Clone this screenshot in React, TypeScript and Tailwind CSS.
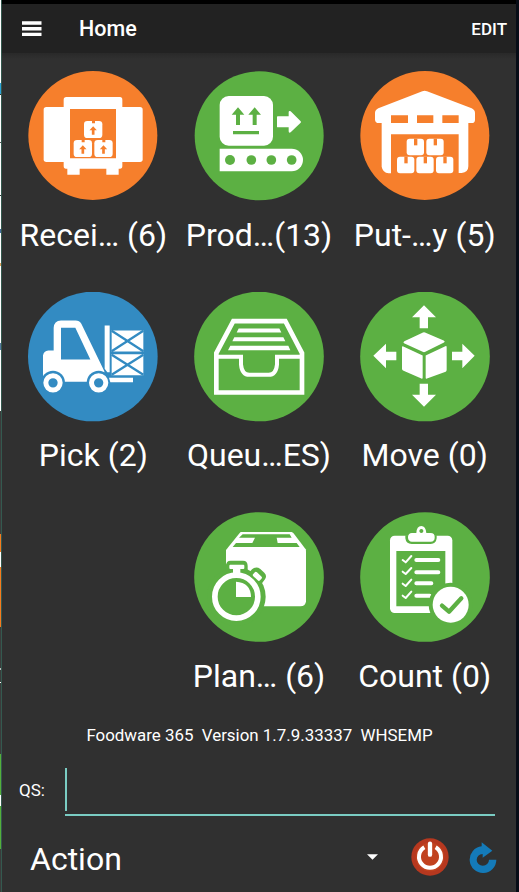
import React, { useState } from 'react';

const ORANGE = '#f67f2c';
const GREEN = '#5cb043';
const BLUE = '#338bc2';

function Carton({ x, y, bg }: { x: number; y: number; bg: string }) {
  return (
    <g transform={`translate(${x} ${y})`}>
      <rect width="55" height="51" rx="10" />
      <path d="M24 -1h9v8h-9z M27.500 16l11 12h-7v13h-8V28h-7z" fill={bg} />
    </g>
  );
}

function ReceiveIcon() {
  return (
    <svg viewBox="25 27 390 390" className="size-[130px]" fill="#fff">
      <circle cx="219.500" cy="220.500" r="193.500" fill={ORANGE} />
      <rect x="72" y="135" width="90" height="165" rx="8" />
      <rect x="280" y="135" width="89" height="165" rx="8" />
      <path d="M140 105h161q7 0 7 8v199q0 8-7 8h-4v18h-37v-18h-80v18h-37v-18h-4q-7 0-7-8V113q0-8 8-8z" />
      <path d="M151 141h138v148H151z" fill={ORANGE} />
      <Carton x={193} y={177} bg={ORANGE} />
      <Carton x={162} y={234} bg={ORANGE} />
      <Carton x={224} y={234} bg={ORANGE} />
    </svg>
  );
}

function ProductionIcon() {
  return (
    <svg viewBox="42 27 390 390" className="size-[130px]" fill="#fff">
      <circle cx="237.500" cy="221.500" r="193.500" fill={GREEN} />
      <rect x="119" y="102" width="160" height="149" rx="27" />
      <path d="M174 136l19 22h-13v31h-12v-31h-13z M224 136l19 22h-13v31h-12v-31h-13z M159 207h78v10h-78z" fill={GREEN} />
      <path d="M293 163h33v-12q0-6 6-3l30 30q2 2 0 4l-30 29q-6 3-6-3v-12h-33q-2 0-2-2v-29q0-2 2-2z" />
      <path d="M119 260h216a34 34 0 0 1 0 68H119z" />
      <g fill={GREEN}>
        <circle cx="150" cy="294" r="15" />
        <circle cx="214" cy="294" r="14.500" />
        <circle cx="274" cy="294" r="14.500" />
        <circle cx="335" cy="294" r="14.500" />
      </g>
    </svg>
  );
}

function PutAwayIcon() {
  const boxes = [[184, 230], [243, 230], [155, 284], [213, 284], [272, 284]];
  return (
    <svg viewBox="44 27 390 390" className="size-[130px]" fill="#fff">
      <circle cx="238.500" cy="220.500" r="193.500" fill={ORANGE} />
      <path d="M231 88q7-3 14 0l134 51q10 5 10 14v20q0 10-10 10h-10v130q0 18-20 20h-9V217H137v117h-7q-18-2-21-20V183h-9q-10 0-11-10v-20q0-9 10-14z" />
      <path d="M137 160h51v23h-51z M215 160h49v23h-49z M291 160h49v23h-49z" fill={ORANGE} />
      {boxes.map(([x, y]) => (
        <g key={`${x}-${y}`} transform={`translate(${x} ${y})`}>
          <rect width="52" height="50" rx="9" />
          <path d="M22 0h10v20h-10z" fill={ORANGE} />
        </g>
      ))}
    </svg>
  );
}

function PickIcon() {
  return (
    <svg viewBox="25 28.500 390 390" className="size-[130px]" fill="#fff">
      <circle cx="219.500" cy="222" r="194.500" fill={BLUE} />
      <path fillRule="evenodd" d="M124 114h44q11 0 17 10l69 142v32H70v-79q2-14 16-15h16v-68q1-21 22-22z M124 136v95h88l-45-95z" />
      <circle cx="100" cy="301" r="36" fill={BLUE} />
      <circle cx="237" cy="301" r="36" fill={BLUE} />
      <path d="M255 129h15v140h-7l-8-10z M268 286h72v13h-68z" />
      <circle cx="100" cy="301" r="21.500" fill="none" stroke="#fff" strokeWidth="15" />
      <circle cx="237" cy="301" r="21.500" fill="none" stroke="#fff" strokeWidth="15" />
      <path d="M276 144h95v63h-95z M276 215h95v63h-95z" />
      <path d="M276 145l95 61 M371 145l-95 61 M276 217l95 60 M371 217l-95 60" stroke={BLUE} strokeWidth="7" />
    </svg>
  );
}

function QueueIcon() {
  return (
    <svg viewBox="42 28.500 390 390" className="size-[130px]" fill="#fff">
      <circle cx="237" cy="222" r="194.500" fill={GREEN} />
      <g fill="none" stroke="#fff">
        <path d="M109 212l51-96h156l50 96v118H109z" strokeWidth="14" />
        <path d="M112 223h71v23q3 31 25 31h58q22 0 25-31v-23h72" strokeWidth="12" />
      </g>
      <path d="M176 138h122l6 12H170z M163 164h147l6 12H157z M151 190h174l6 13H144z" />
    </svg>
  );
}

function MoveIcon() {
  return (
    <svg viewBox="44 28.500 390 390" className="size-[130px]" fill="#fff">
      <circle cx="239" cy="222" r="194.500" fill={GREEN} />
      <path d="M236 68l36 36h-24v33h-25v-33h-23z M236 373l36-36h-24v-33h-25v33h-23z M84 220l38-36v24h31v25h-31v24z M388 220l-37-36v24h-31v25h31v24z" />
      <path d="M233 150q3-1 6 0l56 24q6 3 1 6l-56 28q-4 2-8 0l-56-26q-4-3 1-6z M170 195q0-5 4-3l58 27v66q0 5-4 3l-55-24q-3-2-3-5z M241 219l59-28q4-2 4 3v68q0 4-3 6l-56 20q-4 2-4-3z" />
    </svg>
  );
}

function PlanIcon() {
  return (
    <svg viewBox="42 30 390 390" className="size-[130px]" fill="#fff">
      <circle cx="237" cy="225" r="194.500" fill={GREEN} />
      <path d="M182 90h153l5 3 37 49q1 3 1 7v149q-1 15-17 15H138V144l41-51z" />
      <path d="M188 97h141l6 10h-45l3 16h57l9 12H158l10-12h49l8-16h-48z" fill={GREEN} />
      <circle cx="169" cy="284" r="88" fill={GREEN} />
      <path d="M138 192q0-16 14-16h37q14 0 14 16v13q0 9-11 11h-43q-11-2-11-11z M206 214l10-12q12-10 25-1l12 11q9 9 2 20l-13 17z" fill={GREEN} />
      <path d="M137 187h10v18h-10z" fill={GREEN} />
      <circle cx="169" cy="284" r="64.500" fill="none" stroke="#fff" strokeWidth="17" />
      <path d="M151 188h39q3 0 3 3v7q0 3-3 3h-9v17h-22v-17h-8q-3 0-3-3v-7q0-3 3-3z" />
      <rect x="-14" y="-8" width="28" height="16" rx="5" transform="translate(232 223) rotate(43)" />
      <path d="M168 239q44 2 45 46h-45z" />
    </svg>
  );
}

function CountIcon() {
  return (
    <svg viewBox="44 30 390 390" className="size-[130px]" fill="#fff">
      <circle cx="239" cy="225" r="194.500" fill={GREEN} />
      <rect x="134" y="101" width="187" height="232" rx="14" />
      <path d="M153 147h147v166H153z M180 100h94v9q-2 17-18 17h-57q-17 0-19-17z" fill={GREEN} />
      <path fillRule="evenodd" d="M200 93h13q1-21 15-21 13 0 15 21h13q12 1 12 11v3q0 11-12 12h-56q-11-1-12-12v-3q1-10 12-11z M228 81a6 6 0 1 0 .1 0z" />
      <g stroke="#fff" strokeLinecap="round" strokeLinejoin="round" fill="none">
        <path d="M172 174l9 7 17-19 M172 209l9 7 17-18 M172 245l9 7 17-19 M172 281l9 7 17-19" strokeWidth="6" />
        <path d="M213 174h66 M213 211h66 M213 244h45 M213 281h40" strokeWidth="12" />
      </g>
      <circle cx="316" cy="308" r="66" fill={GREEN} />
      <circle cx="316" cy="308" r="54" />
      <path d="M290 311l21 18 37-40" fill="none" stroke={GREEN} strokeWidth="13" strokeLinecap="round" strokeLinejoin="round" />
    </svg>
  );
}

const tiles = [
  { label: 'Recei… (6)', Icon: ReceiveIcon },
  { label: 'Prod…(13)', Icon: ProductionIcon },
  { label: 'Put-…y (5)', Icon: PutAwayIcon },
  { label: 'Pick (2)', Icon: PickIcon },
  { label: 'Queu…ES)', Icon: QueueIcon },
  { label: 'Move (0)', Icon: MoveIcon },
  null,
  { label: 'Plan… (6)', Icon: PlanIcon },
  { label: 'Count (0)', Icon: CountIcon },
];

// sliver of the window behind the app
function BackgroundEdge() {
  return (
    <div className="flex w-px shrink-0 flex-col bg-[#3a3b3b]">
      <div className="h-[83px] bg-white" />
      <div className="h-[11px] bg-[#2ba3d9]" />
      <div className="h-px bg-[#333]" />
      <div className="h-[47px] bg-white" />
      <div className="h-px bg-[#555]" />
      <div className="h-[52px] bg-white" />
      <div className="h-px bg-[#333]" />
      <div className="h-[33px] bg-white" />
      <div className="h-[4px] bg-[#456b9c]" />
      <div className="h-[30px] bg-white" />
      <div className="h-[3px] bg-[#e0a25b]" />
      <div className="h-[77px] bg-white" />
      <div className="h-[7px] bg-[#55799f]" />
      <div className="h-[61px] bg-white" />
      <div className="mt-[123px] h-[18px] bg-[#f67b1e]" />
      <div className="h-[15px] bg-white" />
      <div className="h-[60px] bg-[#f67b1e]" />
      <div className="mt-[41px] h-[2px] bg-[#bbb]" />
      <div className="mt-[12px] h-px bg-white" />
      <div className="mt-[71px] h-[41px] bg-[#54b03a]" />
      <div className="h-[11px] bg-white" />
      <div className="h-[43px] bg-[#54b03a]" />
    </div>
  );
}

export default function App() {
  const [query, setQuery] = useState('');

  return (
    <div className="flex h-[892px] w-[519px] overflow-hidden bg-[#070c16] font-['Roboto',sans-serif] text-white">
      <BackgroundEdge />
      <div className="w-px shrink-0 bg-[#34594f]" />

      <div className="flex w-[514px] flex-col bg-[#303030]">
        <div className="h-1 bg-black" />

        {/* HEADER */}
        <header className="flex h-[49px] items-center bg-[#222222] pr-[9px] pl-5">
          <button aria-label="Menu">
            <svg viewBox="0 0 20 16" className="h-4 w-5" fill="#fff">
              <path d="M0 .3h19.500v3.400H0z M0 6h19.500v3.400H0z M0 11.700h19.500v3.400H0z" />
            </svg>
          </button>
          <h1 className="ml-[37px] pt-[2px] text-[21.5px] font-medium">Home</h1>
          <button className="ml-auto pt-[3px] text-[17px] font-medium">EDIT</button>
        </header>
        <div className="h-[6px] bg-linear-to-b from-[#292929] to-[#303030]" />

        {/* TILES */}
        <div className="mt-3 grid grid-cols-3 gap-y-[38px] px-[8.5px]">
          {tiles.map((tile, i) =>
            tile ? (
              <div key={tile.label} className="flex flex-col items-center gap-[14.5px]">
                <tile.Icon />
                <span className="text-[32px] leading-[38px] whitespace-nowrap">{tile.label}</span>
              </div>
            ) : (
              <div key={i} />
            )
          )}
        </div>

        <p className="mt-[30.5px] pl-px text-center text-[16.9px] leading-5 whitespace-pre">Foodware 365  Version 1.7.9.33337  WHSEMP</p>

        {/* QUICK SEARCH */}
        <label className="mt-[21px] flex h-[50px] pr-[21px] pl-[17px]">
          <span className="w-[46px] pt-[14px] text-[17px] leading-5">QS:</span>
          <div className="flex flex-1 border-b-2 border-[#7accc3] pt-[2px] pb-[3px]">
            <span className="w-[2px] bg-[#7accc3]" />
            <input
              value={query} onChange={(e) => setQuery(e.target.value)}
              className="w-full bg-transparent text-[17px] outline-none"
            />
          </div>
        </label>

        {/* ACTION BAR */}
        <div className="flex h-[76px] items-center pt-[5px] pr-[19px] pl-[28px]">
          <span className="pt-[4px] text-[32px] leading-[38px]">Action</span>
          <svg viewBox="0 0 11 6" className="ml-auto h-[6px] w-[11px]" fill="#fff">
            <path d="M0 .3h11L5.500 5.700z" />
          </svg>
          <button aria-label="Log off" className="ml-[33px]">
            <svg viewBox="0 0 114 114" className="size-[38px]" fill="none">
              <circle cx="57" cy="57" r="56" fill="#b6381f" />
              <circle cx="57" cy="57" r="43" fill="#c1421f" />
              <path d="M40 28a33 33 0 1 0 34 0" stroke="#fff" strokeWidth="12" />
              <path d="M57 17v33" stroke="#fff" strokeWidth="13" strokeLinecap="round" />
            </svg>
          </button>
          <button aria-label="Refresh" className="ml-[20px] pt-px">
            <svg viewBox="0 0 84 93" className="h-[31px] w-[28px]">
              <path d="M38 1l32 25-29 21V36Q24 38 23 53a18 18 0 0 0 37 0h22a40 40 0 1 1-44-40z" fill="#147ab8" />
            </svg>
          </button>
        </div>
      </div>
    </div>
  );
}
